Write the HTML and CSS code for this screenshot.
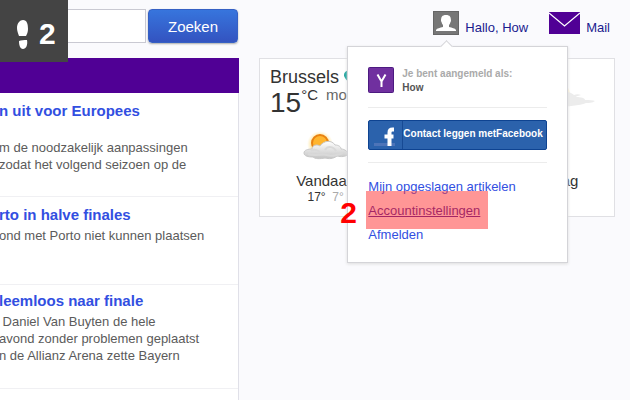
FILE: index.html
```html
<!DOCTYPE html>
<html lang="nl">
<head>
    <meta charset="UTF-8">
    <meta name="viewport" content="width=device-width, initial-scale=1.0">
    <title>Yahoo</title>
    <link rel="stylesheet" href="styles.css">
</head>
<body>
    <div class="page">
        <!-- Left Side: Search and News -->
        <div class="left-content">
            <form class="search">
                <input type="text" class="search-field" aria-label="Zoeken">
                <button type="button" class="search-btn">Zoeken</button>
            </form>
            <div class="news-bar"></div>
            <div class="news">
                <div class="article">
                    <h2 class="tall"><a href="#">n uit voor Europees</a></h2>
                    <p>m de noodzakelijk aanpassingen<br>zodat het volgend seizoen op de</p>
                </div>
                <div class="article short">
                    <h2><a href="#">rto in halve finales</a></h2>
                    <p>ond met Porto niet kunnen plaatsen</p>
                </div>
                <div class="article tight">
                    <h2><a href="#">leemloos naar finale</a></h2>
                    <p>&nbsp;Daniel Van Buyten de hele<br>avond zonder problemen geplaatst<br>n de Allianz Arena zette Bayern</p>
                </div>
            </div>
        </div>

        <!-- Right Side: Account and Weather -->
        <div class="right-content">
            <div class="top-nav">
                <div class="account">
                    <a href="#" class="nav-link">
                        <svg class="avatar" width="26" height="24" viewBox="0 0 26 24">
                            <rect x="0.5" y="0.5" width="25" height="23" fill="#777" stroke="#666"/>
                            <path d="M3 20v-1c1-2 4-2 7-3v-2c-1-1-1-2-2-4 0-4 1-6 5-6s5 2 5 6c-1 2-1 3-2 4v2c3 1 6 1 7 3v1z" fill="#fff"/>
                        </svg>
                        <span>Hallo, How</span>
                    </a>
                    <div class="menu">
                        <span class="caret"></span>
                        <div class="signed-in">
                            <svg width="26" height="26" viewBox="0 0 26 26">
                                <rect x="0.5" y="0.5" width="25" height="25" rx="1" fill="#70309f" stroke="#4c1a80"/>
                                <path d="M9.500 7.500l4 7 4-7M13.500 14v6" fill="none" stroke="#fff" stroke-width="2"/>
                            </svg>
                            <p>Je bent aangemeld als:<br><span class="user">How</span></p>
                        </div>
                        <div class="connect">
                            <button type="button" class="fb-btn">
                                <svg width="34" height="28" viewBox="0 0 34 28">
                                    <rect x="5" y="22" width="21" height="3" fill="#4d74b8"/>
                                    <path d="M25 8.500h-1.500c-2 0-3 1-3 3V25M15.500 15.500h9" fill="none" stroke="#fff" stroke-width="4"/>
                                    <path d="M33.500 0v28" stroke="#174a94"/>
                                </svg>
                                <span>Contact leggen metFacebook</span>
                            </button>
                        </div>
                        <ul class="links">
                            <li><a href="#">Mijn opgeslagen artikelen</a></li>
                            <li class="marked"><a href="#">Accountinstellingen</a><span class="marker"></span><span class="marker-num">2</span></li>
                            <li><a href="#">Afmelden</a></li>
                        </ul>
                    </div>
                </div>
                <a href="#" class="nav-link">
                    <svg width="31" height="22" viewBox="0 0 31 22">
                        <rect width="31" height="22" fill="#500095"/>
                        <path d="M0 1l15.500 13L31 1" fill="none" stroke="#fff" stroke-width="1.300"/>
                    </svg>
                    <span>Mail</span>
                </a>
            </div>

            <div class="weather">
                <div class="city">Brussels
                    <svg width="12" height="14" viewBox="0 0 12 14">
                        <path d="M6 14C3 10 0 8 0 5a6 5 0 0 1 12 0c0 3-3 5-6 9z" fill="#12a09a"/>
                        <circle cx="6" cy="5" r="2" fill="#fff"/>
                    </svg>
                </div>
                <div class="now"><span class="temp">15</span><span class="unit">°C</span><span class="sky">mo</span></div>
                <svg class="sky-icon" width="60" height="32" viewBox="0 0 60 32">
                    <circle cx="19" cy="15" r="13" fill="#fff6dc"/>
                    <path d="M5 26c2-7 9-8 14-7 2-8 12-9 17-4 2-1 5-1 7 0-2 1-5 1-5 2 5 0 9 1 9 3 4 0 8 0 10 1-3 2-6 2-9 2-10 4-31 4-43 3z" fill="#ececec"/>
                </svg>
                <div class="days">
                    <div class="day">
                        <svg width="46" height="32" viewBox="0 0 46 32">
                            <defs>
                                <radialGradient id="glow">
                                    <stop offset="0.500" stop-color="#ffd45c"/>
                                    <stop offset="1" stop-color="#ffe9a8" stop-opacity="0"/>
                                </radialGradient>
                                <linearGradient id="cloud" x2="0" y2="1">
                                    <stop offset="0" stop-color="#fff"/>
                                    <stop offset="1" stop-color="#c4c4c4"/>
                                </linearGradient>
                            </defs>
                            <circle cx="17" cy="13" r="13" fill="url(#glow)"/>
                            <circle cx="17" cy="12" r="8" fill="#ffb52e" stroke="#e98212" stroke-width="2"/>
                            <path d="M1 22c0-3 4-4 8-4 0-4 5-5 8-3 4-6 12-6 15-1 4 0 6 2 6 4 4 0 7 3 7 5-2 3-7 3-11 2-4 3-8 3-12 2-5 1-10 1-12-1-5 0-9-1-9-4z" fill="url(#cloud)" stroke="#c8c8c8"/>
                            <path d="M8 20c4-3 7 0 9 1M22 19c3-5 9-3 11 1M5 23c7 3 14-1 19 1s11 0 16-2" fill="none" stroke="#d9d9d9" stroke-width="2"/>
                        </svg>
                        <div class="day-name">Vandaag</div>
                        <div class="range">17°&nbsp; <span class="low">7°</span></div>
                    </div>
                    <div class="day"></div>
                    <div class="day">
                        <div class="day-name">Zaterdag</div>
                    </div>
                </div>
            </div>
        </div>
    </div>

    <!-- Step counter -->
    <div class="step">
        <svg width="12" height="30" viewBox="0 0 12 30">
            <path d="M2 17C1 14 0 12 0 9 0 4 3 1 6 1c4 0 5 4 5 9 0 3-1 5-2 7zM2 22c2-1 5-1 8-1 1 5-1 9-4 9s-4-4-4-8z" fill="#fff"/>
        </svg>
        <span>2</span>
    </div>
</body>
</html>
```
FILE: styles.css
```css
* {
    box-sizing: border-box;
}
body {
    font-family: "Liberation Sans", Arial, sans-serif;
    font-size: 13px;
    background-color: #fafafd;
    margin: 0;
}
h2, p, ul {
    margin: 0;
    padding: 0;
}
a {
    text-decoration: none;
}
svg {
    display: block;
    flex: none;
}
.page {
    display: grid;
    grid-template-columns: 239px 1fr;
    min-height: 100vh;
    overflow: hidden;
}
.left-content {
    display: flex;
    flex-direction: column;
}
.search {
    display: flex;
    gap: 2px;
    padding: 9px 1px 15px 0;
}
.search-field {
    flex: 1;
    min-width: 0;
    height: 34px;
    border: 1px solid #c9c9d2;
    border-left: 0;
    background: white;
}
.search-btn {
    width: 90px;
    height: 34px;
    padding: 0;
    border: 1px solid #3560c4;
    border-radius: 4px;
    background: linear-gradient(#3775dd, #3353c0);
    box-shadow: 0 1px 2px #aaa;
    color: white;
    font-family: inherit;
    font-size: 15px;
}
.news-bar {
    height: 35px;
    background: #500095;
}
.news {
    flex: 1;
    background: white;
    border-right: 1px solid #e0e0e8;
}
.article {
    min-height: 104px;
    padding-top: 8px;
    border-bottom: 1px solid #f0f0f3;
    white-space: nowrap;
}
.short {
    min-height: 88px;
}
.tight {
    padding-top: 6px;
}
.article h2 {
    font-size: 15px;
    line-height: 20px;
    margin: 0 0 2px -1px;
}
.article .tall {
    min-height: 36px;
}
.article a {
    color: #324fe1;
}
.article p {
    margin-left: -1px;
    color: #5b5b5b;
    line-height: 17px;
}
.top-nav {
    display: flex;
    justify-content: flex-end;
    gap: 21px;
    height: 58px;
    padding: 11px 20px 0 0;
}
.nav-link {
    display: flex;
    align-items: center;
    gap: 6px;
    height: 24px;
    color: #1b1b8f;
}
.nav-link span {
    padding-top: 8px;
}
.account {
    position: relative;
}

/* Account menu */
.menu {
    position: absolute;
    z-index: 1;
    top: 35px;
    left: -86px;
    width: 221px;
    padding: 20px;
    padding-bottom: 15px;
    border: 1px solid #d4d4d8;
    background: white;
    box-shadow: 0 1px 3px #ddd;
}
.caret {
    position: absolute;
    top: -5px;
    left: 94px;
    width: 9px;
    height: 9px;
    border: 1px solid #d4d4d8;
    border-right: 0;
    border-bottom: 0;
    background: white;
    transform: rotate(45deg);
}
.signed-in {
    display: flex;
    gap: 8px;
    padding-bottom: 12px;
    border-bottom: 1px solid #ececec;
}
.signed-in p {
    color: #aaa;
    font-size: 10px;
    font-weight: bold;
    line-height: 14px;
    white-space: nowrap;
}
.signed-in .user {
    color: #555;
}
.connect {
    padding: 12px 0;
    border-bottom: 1px solid #ececec;
}
.fb-btn {
    display: flex;
    width: 100%;
    height: 30px;
    padding: 0;
    border: 1px solid #0e4391;
    border-radius: 2px;
    background: #2b62ac;
    color: white;
    font-family: inherit;
    font-size: 10px;
    font-weight: bold;
    line-height: 26px;
    white-space: nowrap;
}
.links {
    padding-top: 12px;
    list-style: none;
    line-height: 24px;
}
.links a {
    color: #324fe1;
}
.marked {
    position: relative;
}
.links .marked a {
    color: #4a1d9c;
    text-decoration: underline;
}
.marker {
    position: absolute;
    top: -8px;
    left: -2px;
    width: 122px;
    height: 38px;
    background: rgba(255, 45, 45, 0.5);
}
.marker-num {
    position: absolute;
    top: 2px;
    left: -28px;
    color: red;
    font-size: 30px;
    font-weight: bold;
}

/* Weather */
.weather {
    position: relative;
    height: 159px;
    margin: 0 15px 0 20px;
    padding: 8px 10px;
    border: 1px solid #e0e0e4;
    background: white;
    color: #333;
}
.city {
    display: flex;
    align-items: center;
    gap: 5px;
    font-size: 18px;
    line-height: 20px;
}
.now {
    display: flex;
    height: 32px;
}
.temp {
    font-size: 28px;
    line-height: 32px;
}
.unit, .sky {
    font-size: 15px;
    line-height: 16px;
}
.sky {
    margin-left: 8px;
    color: #666;
}
.sky-icon {
    position: absolute;
    top: 21px;
    right: 16px;
}
.days {
    display: grid;
    grid-template-columns: repeat(3, 1fr);
    padding-top: 12px;
    text-align: center;
}
.day {
    display: flex;
    flex-direction: column;
    align-items: center;
    justify-content: flex-start;
    height: 74px;
}
.day-name {
    margin-top: 9px;
    font-size: 15px;
    line-height: 18px;
}
.day .day-name:first-child {
    margin-top: 41px;
}
.range {
    font-size: 12px;
    line-height: 14px;
}
.low {
    color: #aaa;
}

.step {
    position: absolute;
    z-index: 2;
    top: 0;
    left: 0;
    display: flex;
    align-items: center;
    gap: 10px;
    width: 68px;
    height: 62px;
    padding: 6px 0 0 17px;
    background: #444;
    color: white;
    font-size: 30px;
    font-weight: bold;
}
```
